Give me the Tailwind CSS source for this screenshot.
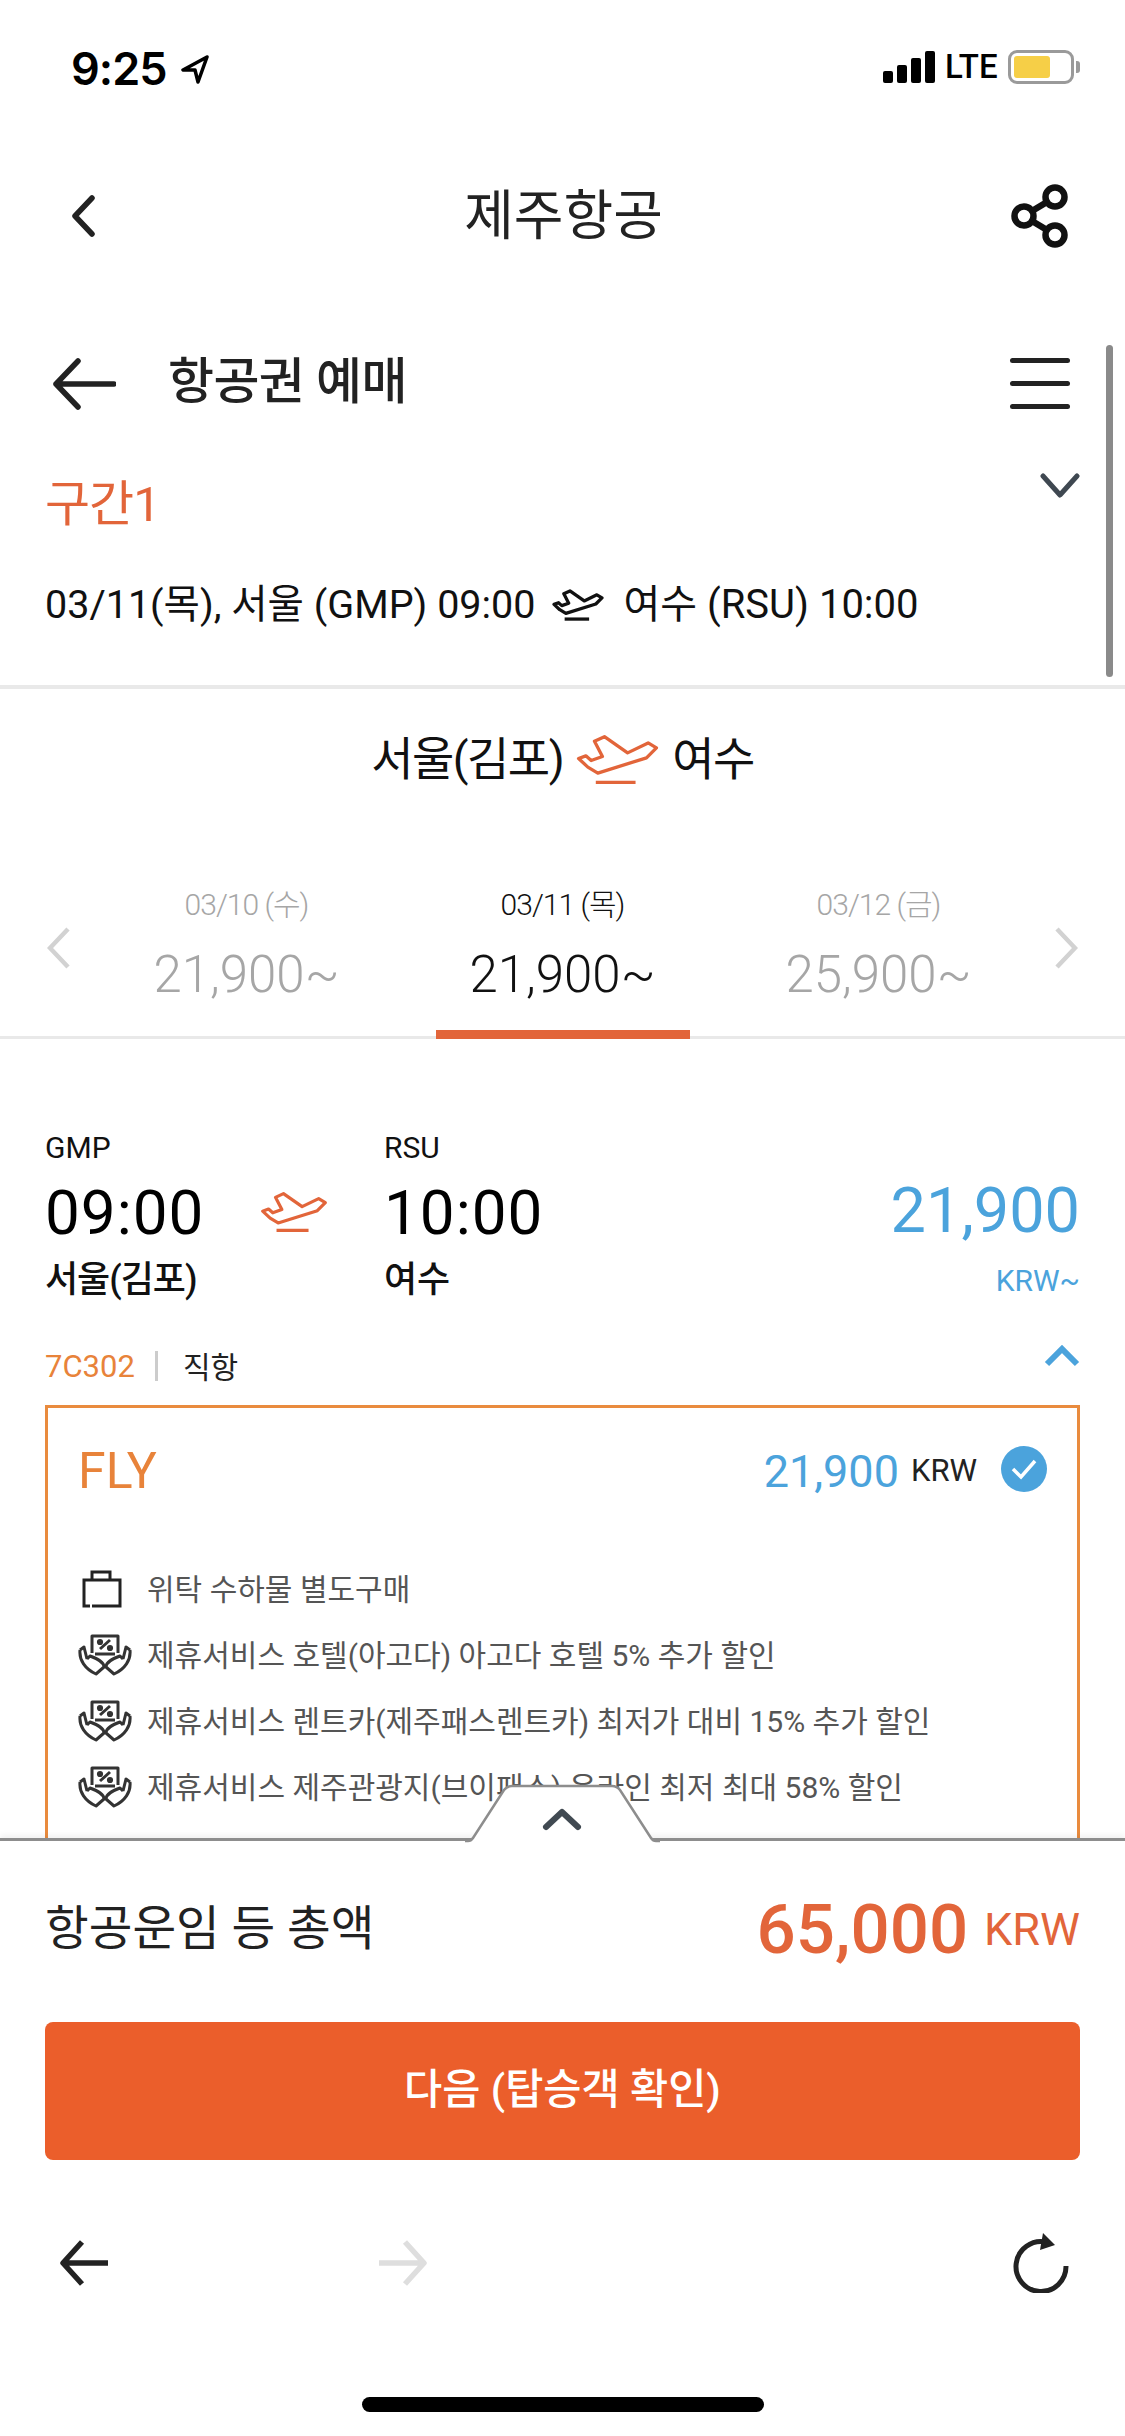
<!DOCTYPE html>
<html lang="ko"><head><meta charset="utf-8">
<script src="https://cdn.jsdelivr.net/npm/@tailwindcss/browser@4"></script>
</head>
<body class="bg-white">
<div class="relative w-[1125px] h-[2436px] overflow-hidden bg-white text-[#222] font-['Roboto','Noto_Sans_CJK_KR',sans-serif]">

  <!-- status bar -->
  <div class="h-[132px] relative flex items-start justify-between pl-[71px] pr-[45px] pt-[43px]">
    <div class="flex items-center gap-[14px] h-[52px]">
      <span class="font-['Inter',sans-serif] font-semibold text-[45px] leading-[52px] tracking-[-1px] text-black">9:25</span>
      <svg class="w-[30px] h-[30px]" viewBox="0 0 30 30"><path d="M27 3 L3 16 L15 16 L18 28 Z" fill="none" stroke="#000" stroke-width="3.5" stroke-linejoin="round"/></svg>
    </div>
    <div class="flex items-center h-[44px] mt-[2px]">
      <div class="flex items-end gap-[4px] h-[32px]">
        <div class="w-[10px] h-[12px] bg-black rounded-[2px]"></div>
        <div class="w-[10px] h-[18px] bg-black rounded-[2px]"></div>
        <div class="w-[10px] h-[25px] bg-black rounded-[2px]"></div>
        <div class="w-[10px] h-[32px] bg-black rounded-[2px]"></div>
      </div>
      <span class="ml-[10px] font-['Roboto',sans-serif] font-medium text-[33px] leading-[44px] w-[63px] text-black">LTE</span>
      <div class="w-[66px] h-[34px] border-[3px] border-[#9a9a9a] rounded-[9px] p-[3px]">
        <div class="w-[36px] h-full bg-[#f6cf47] rounded-[3px]"></div>
      </div>
      <div class="w-[4px] h-[12px] ml-[2px] bg-[#9a9a9a] rounded-r-[3px]"></div>
    </div>
  </div>

  <!-- scroll area -->
  <div class="h-[1706px] overflow-hidden relative">
    <!-- nav -->
    <div class="h-[168px] relative flex items-center justify-between pl-[70px] pr-[54px]">
      <svg class="w-[26px] h-[42px]" viewBox="0 0 26 42"><path d="M22 3 L5 21 L22 39" fill="none" stroke="#222" stroke-width="5.5" stroke-linecap="round" stroke-linejoin="round"/></svg>
      <span class="text-[54px] leading-[60px] text-[#222] mt-[1px] ml-[20px]">제주항공</span>
      <svg class="w-[60px] h-[64px]" viewBox="0 0 60 64"><g fill="none" stroke="#111" stroke-width="6.5"><circle cx="13" cy="32" r="9.5"/><circle cx="44" cy="13" r="9.5"/><circle cx="44" cy="51" r="9.5"/><path d="M21 27 L36 18 M21 37 L36 46"/></g></svg>
    </div>

    <!-- section title -->
    <div class="h-[162px] flex items-center pl-[52px] pr-[55px]">
      <svg class="w-[64px] h-[52px] mt-[6px]" viewBox="0 0 64 52"><path d="M26 3 L4 26 L26 49 M4 26 H62" fill="none" stroke="#222" stroke-width="5.5" stroke-linecap="round" stroke-linejoin="round"/></svg>
      <span class="ml-[52px] text-[50px] leading-[60px] font-medium text-[#222] tracking-[-0.6px] mt-[2px]">항공권 예매</span>
      <div class="ml-auto w-[60px] h-[51px] mt-[4px] flex flex-col justify-between">
        <div class="h-[5px] rounded bg-[#222]"></div><div class="h-[5px] rounded bg-[#222]"></div><div class="h-[5px] rounded bg-[#222]"></div>
      </div>
    </div>

    <!-- leg -->
    <div class="h-[86px] flex items-center justify-between pl-[45px] pr-[45px]">
      <span class="text-[49px] leading-[60px] text-[#e2653a] tracking-[-1px] -mt-[1px]">구간1</span>
      <svg class="w-[40px] h-[26px] -mt-[38px]" viewBox="0 0 40 26"><path d="M3 3 L20 22 L37 3" fill="none" stroke="#3f4851" stroke-width="5" stroke-linecap="round" stroke-linejoin="round"/></svg>
    </div>
    <div class="h-[114px] flex items-center pl-[45px] text-[39.5px] leading-[50px] text-[#111] mb-[23px]">
      <span>03/11(목), 서울 (GMP) 09:00</span>
      <svg class="w-[52px] h-[34px] ml-[16px]" viewBox="160 105 255 160"><path d="M170 182 L192 174 L208 188 L242 176 L218 130 L248 116 L318 165 L380 135 L405 150 L375 180 L228 226 L198 208 Z" fill="none" stroke="#111" stroke-width="16" stroke-linejoin="round"/><path d="M222 254 H342" stroke="#111" stroke-width="16"/></svg>
      <span class="ml-[20px] text-[40px]">여수 (RSU) 10:00</span>
    </div>
    <div class="h-[4px] bg-[#e9e9e9]"></div>

    <!-- route -->
    <div class="h-[136px] flex items-center justify-center text-[46px] leading-[56px] text-[#111] tracking-[-1.5px]">
      <span class="mt-[3px]">서울(김포)</span>
      <svg class="w-[85px] h-[53px] mx-[12px] mt-[4px]" viewBox="160 105 255 160"><path d="M170 182 L192 174 L208 188 L242 176 L218 130 L248 116 L318 165 L380 135 L405 150 L375 180 L228 226 L198 208 Z" fill="none" stroke="#e2653a" stroke-width="10" stroke-linejoin="round"/><path d="M222 254 H342" stroke="#e2653a" stroke-width="10"/></svg>
      <span class="mt-[3px]">여수</span>
    </div>

    <!-- dates -->
    <div class="mt-[31px] h-[183px] relative border-b-[3px] border-[#e9e9e9] grid grid-cols-[1fr_316px_316px_316px_1fr] items-start">
      <div class="pl-[47px] pt-[71px]">
        <svg class="w-[23px] h-[42px]" viewBox="0 0 23 42"><path d="M21 2 L3 21 L21 40" fill="none" stroke="#d2d2d2" stroke-width="4.5"/></svg>
      </div>
      <div class="text-center text-[#a6a6a6]"><div class="h-[85px] pt-[27px] text-[30px] leading-[44px] tracking-[-1px] font-light">03/10 (수)</div><div class="text-[51px] leading-[68px] font-light">21,900~</div></div>
      <div class="text-center text-[#111] relative h-[180px]"><div class="h-[85px] pt-[27px] text-[30px] leading-[44px] tracking-[-1px] font-light">03/11 (목)</div><div class="text-[51px] leading-[68px] font-light">21,900~</div><div class="absolute left-[31px] right-[31px] -bottom-[3px] h-[9px] bg-[#e2653a]"></div></div>
      <div class="text-center text-[#a6a6a6]"><div class="h-[85px] pt-[27px] text-[30px] leading-[44px] tracking-[-1px] font-light">03/12 (금)</div><div class="text-[51px] leading-[68px] font-light">25,900~</div></div>
      <div class="flex justify-end pr-[47px] pt-[71px]">
        <svg class="w-[23px] h-[42px]" viewBox="0 0 23 42"><path d="M2 2 L20 21 L2 40" fill="none" stroke="#d2d2d2" stroke-width="4.5"/></svg>
      </div>
    </div>

    <!-- flight -->
    <div class="pt-[86px] px-[45px] flex">
      <div class="w-[340px]">
        <div class="h-[44px] flex items-center text-[30px] text-[#111]">GMP</div>
        <div class="h-[86px] flex items-center"><span class="text-[62px] tracking-[1px] text-black w-[215px]">09:00</span>
          <svg class="w-[68px] h-[44px]" viewBox="160 105 255 160"><path d="M170 182 L192 174 L208 188 L242 176 L218 130 L248 116 L318 165 L380 135 L405 150 L375 180 L228 226 L198 208 Z" fill="none" stroke="#e2653a" stroke-width="12" stroke-linejoin="round"/><path d="M222 254 H342" stroke="#e2653a" stroke-width="12"/></svg>
        </div>
        <div class="h-[42px] flex items-center text-[36px] font-medium text-[#111] tracking-[-1px] mt-[4px]">서울(김포)</div>
      </div>
      <div class="-ml-[1px]">
        <div class="h-[44px] flex items-center text-[30px] text-[#111]">RSU</div>
        <div class="h-[86px] flex items-center text-[62px] tracking-[1px] text-black">10:00</div>
        <div class="h-[42px] flex items-center text-[36px] font-medium text-[#111] mt-[4px]">여수</div>
      </div>
      <div class="ml-auto text-right text-[#4ba3dc]">
        <div class="h-[44px]"></div>
        <div class="h-[86px] flex items-center justify-end text-[63px] -mt-[1px]">21,900</div>
        <div class="h-[42px] flex items-center justify-end text-[30px] mt-[5px]">KRW~</div>
      </div>
    </div>
    <div class="mt-[39px] h-[52px] px-[45px] flex items-center">
      <span class="text-[31px] text-[#e8833a] mt-[2px]">7C302</span>
      <span class="w-[3px] h-[30px] bg-[#ccc] ml-[20px]"></span>
      <span class="ml-[25px] text-[30px] text-[#222] mt-[2px]">직항</span>
      <svg class="ml-auto w-[36px] h-[22px] -mt-[20px]" viewBox="0 0 36 22"><path d="M3 19 L18 4 L33 19" fill="none" stroke="#4ba3dc" stroke-width="6"/></svg>
    </div>

    <!-- card -->
    <div class="mt-[13px] mx-[45px] border-[3px] border-[#e98b3e] h-[600px] px-[30px]">
      <div class="h-[127px] flex items-center">
        <span class="text-[50px] text-[#e8833a]">FLY</span>
        <span class="ml-auto text-[45px] text-[#4ba3dc]">21,900</span>
        <span class="ml-[12px] text-[31px] text-[#222]">KRW</span>
        <svg class="ml-[24px] w-[46px] h-[46px] -mt-[6px]" viewBox="0 0 46 46"><circle cx="23" cy="23" r="23" fill="#4ba3dc"/><path d="M12 23 L20 31 L34 15" fill="none" stroke="#fff" stroke-width="3.5"/></svg>
      </div>
      <div class="pt-[21px] flex flex-col text-[30px] text-[#555]">
        <div class="h-[66px] flex items-center">
          <div class="w-[69px] pl-[4px]"><svg class="w-[40px] h-[39px]" viewBox="0 0 40 39"><path d="M8 36 H2 V10 H38 V36 H10 M10 10 V2 H28 V10" fill="none" stroke="#222" stroke-width="3"/></svg></div>
          <span>위탁 수하물 별도구매</span>
        </div>
        <div class="h-[66px] flex items-center">
          <div class="w-[69px]"><svg class="w-[54px] h-[42px]" viewBox="0 0 54 42"><g fill="none" stroke="#333" stroke-width="3" stroke-linejoin="round"><path d="M14 19 V2 H40 V19 M17 20 H37"/><path d="M22 15 L32 6"/><circle cx="22" cy="8" r="1.6"/><circle cx="32" cy="14" r="1.6"/><path d="M2 16 C1 26 7 35 18 40 L26 33 C26 28 20 25 12 22 L9 25 M2 16 L6 13 L9 25"/><path d="M52 16 C53 26 47 35 36 40 L28 33 C28 28 34 25 42 22 L45 25 M52 16 L48 13 L45 25"/></g></svg></div>
          <span>제휴서비스 호텔(아고다) 아고다 호텔 5% 추가 할인</span>
        </div>
        <div class="h-[66px] flex items-center">
          <div class="w-[69px]"><svg class="w-[54px] h-[42px]" viewBox="0 0 54 42"><g fill="none" stroke="#333" stroke-width="3" stroke-linejoin="round"><path d="M14 19 V2 H40 V19 M17 20 H37"/><path d="M22 15 L32 6"/><circle cx="22" cy="8" r="1.6"/><circle cx="32" cy="14" r="1.6"/><path d="M2 16 C1 26 7 35 18 40 L26 33 C26 28 20 25 12 22 L9 25 M2 16 L6 13 L9 25"/><path d="M52 16 C53 26 47 35 36 40 L28 33 C28 28 34 25 42 22 L45 25 M52 16 L48 13 L45 25"/></g></svg></div>
          <span>제휴서비스 렌트카(제주패스렌트카) 최저가 대비 15% 추가 할인</span>
        </div>
        <div class="h-[66px] flex items-center">
          <div class="w-[69px]"><svg class="w-[54px] h-[42px]" viewBox="0 0 54 42"><g fill="none" stroke="#333" stroke-width="3" stroke-linejoin="round"><path d="M14 19 V2 H40 V19 M17 20 H37"/><path d="M22 15 L32 6"/><circle cx="22" cy="8" r="1.6"/><circle cx="32" cy="14" r="1.6"/><path d="M2 16 C1 26 7 35 18 40 L26 33 C26 28 20 25 12 22 L9 25 M2 16 L6 13 L9 25"/><path d="M52 16 C53 26 47 35 36 40 L28 33 C28 28 34 25 42 22 L45 25 M52 16 L48 13 L45 25"/></g></svg></div>
          <span>제휴서비스 제주관광지(브이패스) 온라인 최저 최대 58% 할인</span>
        </div>
      </div>
    </div>
  </div>

  <!-- bottom sheet -->
  <div class="relative h-[598px] bg-white border-t-[3px] border-[#8d8d8d] shadow-[0_-3px_6px_rgba(0,0,0,0.06)]">
    <svg class="absolute left-[465px] -top-[57px] w-[195px] h-[60px]" viewBox="0 0 195 60"><path d="M0 57 H3 Q6 57 8 54 L39 6 Q42 2 47 2 H147 Q152 2 155 6 L186 54 Q188 57 191 57 H195 V60 H0 Z" fill="#fff" stroke="none"/><path d="M0 57 H3 Q6 57 8 54 L39 6 Q42 2 47 2 H147 Q152 2 155 6 L186 54 Q188 57 191 57 H195" fill="none" stroke="#8d8d8d" stroke-width="2.5"/><path d="M81 43 L97 28 L113 43" fill="none" stroke="#414a52" stroke-width="6" stroke-linecap="round" stroke-linejoin="round"/></svg>
    <div class="h-[181px] pb-[4px] px-[45px] flex items-center">
      <span class="text-[47.5px] text-[#222]">항공운임 등 총액</span>
      <span class="ml-auto text-[69px] text-[#e2653a] font-medium">65,000</span>
      <span class="ml-[16px] text-[45px] text-[#e2653a]">KRW</span>
    </div>
    <div class="mx-[45px] h-[138px] rounded-[8px] bg-[#eb5e2b] flex items-center justify-center text-white text-[41.5px] font-medium pb-[2px]">다음 (탑승객 확인)</div>
    <div class="h-[206px] pl-[60px] pr-[56px] flex items-center">
      <svg class="w-[48px] h-[46px]" viewBox="0 0 48 46"><path d="M22 2 L3 23 L22 44 M3 23 H48" fill="none" stroke="#222" stroke-width="5.5" stroke-linejoin="round"/></svg>
      <svg class="w-[48px] h-[46px] ml-[271px]" viewBox="0 0 48 46"><path d="M26 2 L45 23 L26 44 M45 23 H0" fill="none" stroke="#dedede" stroke-width="5.5" stroke-linejoin="round"/></svg>
      <svg class="w-[56px] h-[60px] ml-auto" viewBox="0 0 56 60"><path d="M53 33 A25 25 0 1 1 33 9" fill="none" stroke="#222" stroke-width="5"/><path d="M30 0 L42 12 L27 17 Z" fill="#222"/></svg>
    </div>
    <div class="mt-[31px] mx-auto w-[402px] h-[15px] rounded-full bg-black"></div>
  </div>

  <!-- page scrollbar -->
  <div class="absolute left-[1106px] top-[345px] w-[7px] h-[332px] rounded-full bg-[#8a8a8a]"></div>
</div>
</body></html>
